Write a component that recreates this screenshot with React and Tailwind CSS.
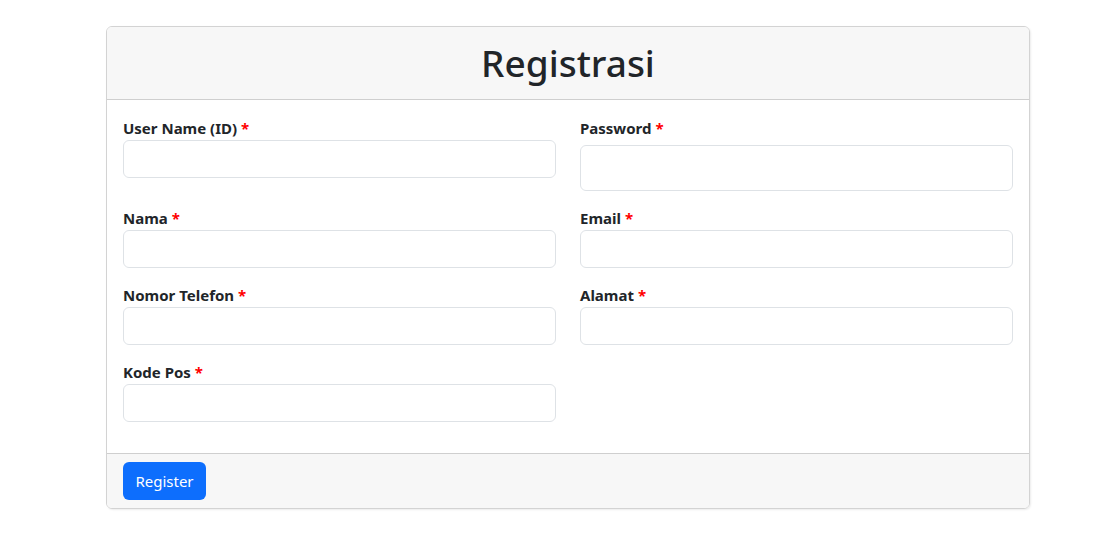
import React from "react";

const font = { fontFamily: '"Segoe UI", "Noto Sans", "Liberation Sans", sans-serif' };

function Field({ label, tall }) {
  return (
    <div className="mb-4 flex flex-col">
      <label className="mb-[1px] text-[15px] font-bold leading-[22px] text-[#212529]">
        {label} <span className="text-[#ff0000]">*</span>
      </label>
      {tall ? (
        <input className="mt-[5px] h-[46px] w-full rounded-[6px] border border-[#dee2e6] bg-white px-3 outline-none" />
      ) : (
        <input className="h-[38px] w-full rounded-[6px] border border-[#dee2e6] bg-white px-3 outline-none" />
      )}
    </div>
  );
}

export default function App() {
  return (
    <div className="min-h-[535px] w-full bg-white pt-[26px]" style={font}>
      <div className="ml-[106px] w-[924px] overflow-hidden rounded-[6px] border border-[#d3d3d3] shadow-[1px_1px_2px_rgba(0,0,0,0.08)]">
        <div className="flex h-[73px] items-center justify-center border-b border-[#cfcfcf] bg-[#f7f7f7]">
          <h1 className="pb-[2px] text-[37px] font-medium leading-none text-[#212529]">Registrasi</h1>
        </div>
        <div className="grid grid-cols-2 gap-x-6 px-4 pb-[15px] pt-[17px]">
          <Field label="User Name (ID)" />
          <Field label="Password" tall />
          <Field label="Nama" />
          <Field label="Email" />
          <Field label="Nomor Telefon" />
          <Field label="Alamat" />
          <Field label="Kode Pos" />
        </div>
        <div className="flex h-[55px] items-center border-t border-[#cfcfcf] bg-[#f7f7f7] px-4">
          <button className="h-[38px] w-[83px] rounded-[6px] bg-[#0d6efd] text-[15px] text-white">Register</button>
        </div>
      </div>
    </div>
  );
}
